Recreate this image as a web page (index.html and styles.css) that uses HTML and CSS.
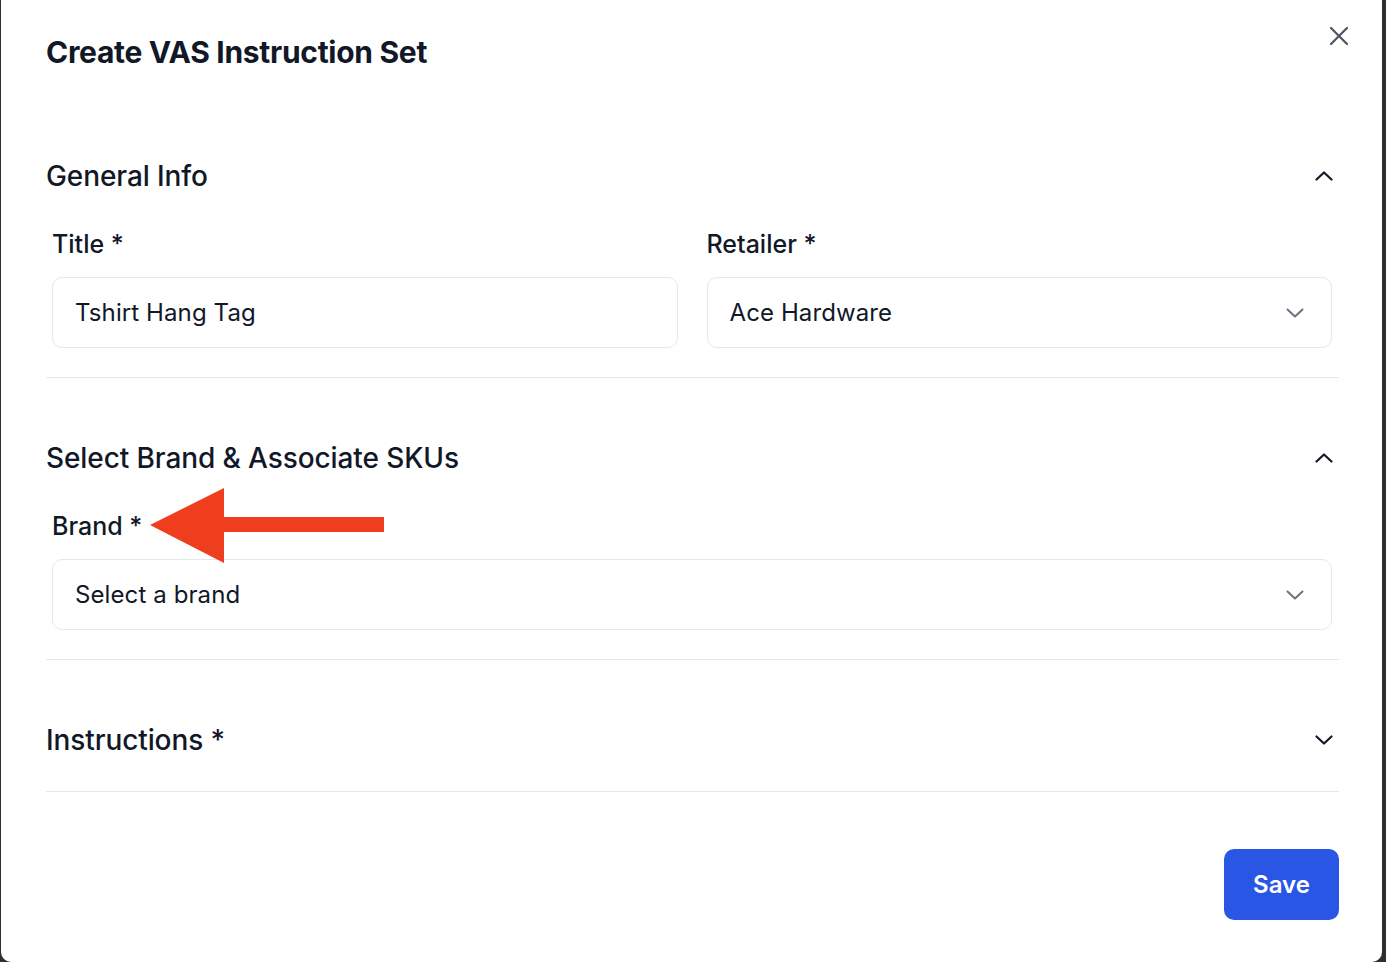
FILE: index.html
```html
<!doctype html>
<html>
<head>
<meta charset="utf-8">
<title>Create VAS Instruction Set</title>
<link rel="stylesheet" href="styles.css">
</head>
<body>
<div class="modal">
	<h1 class="modal-title">Create VAS Instruction Set</h1>
	<button class="close" aria-label="Close">
		<svg width="20" height="20" viewBox="0 0 20 20"><path d="M2 2 L18 18 M18 2 L2 18" stroke="#4b5563" stroke-width="2.2" stroke-linecap="round" fill="none"/></svg>
	</button>

	<div class="section first">
		<div class="section-head">
			<h2>General Info</h2>
			<svg class="chev" width="18" height="10" viewBox="0 0 18 10"><path d="M1.5 8.5 L9 1.5 L16.5 8.5" stroke="#111827" stroke-width="2.2" stroke-linecap="round" stroke-linejoin="round" fill="none"/></svg>
		</div>
		<div class="fields two">
			<div class="field">
				<label>Title *</label>
				<div class="box">Tshirt Hang Tag</div>
			</div>
			<div class="field">
				<label>Retailer *</label>
				<div class="box select">Ace Hardware
					<svg width="18" height="10" viewBox="0 0 18 10"><path d="M1.5 1.5 L9 8.5 L16.5 1.5" stroke="#6b7280" stroke-width="2" stroke-linecap="round" stroke-linejoin="round" fill="none"/></svg>
				</div>
			</div>
		</div>
	</div>

	<div class="section">
		<div class="section-head">
			<h2>Select Brand &amp; Associate SKUs</h2>
			<svg class="chev" width="18" height="10" viewBox="0 0 18 10"><path d="M1.5 8.5 L9 1.5 L16.5 8.5" stroke="#111827" stroke-width="2.2" stroke-linecap="round" stroke-linejoin="round" fill="none"/></svg>
		</div>
		<div class="fields">
			<div class="field">
				<label>Brand *</label>
				<svg class="pointer" width="236" height="76" viewBox="0 0 236 76"><polygon points="0,37 74,0 74,29 234,29 234,44 74,44 74,75" fill="#ef3e1d"/></svg>
				<div class="box select placeholder">Select a brand
					<svg width="18" height="10" viewBox="0 0 18 10"><path d="M1.5 1.5 L9 8.5 L16.5 1.5" stroke="#6b7280" stroke-width="2" stroke-linecap="round" stroke-linejoin="round" fill="none"/></svg>
				</div>
			</div>
		</div>
	</div>

	<div class="section collapsed">
		<div class="section-head">
			<h2>Instructions *</h2>
			<svg class="chev" width="18" height="10" viewBox="0 0 18 10"><path d="M1.5 1.5 L9 8.5 L16.5 1.5" stroke="#111827" stroke-width="2.2" stroke-linecap="round" stroke-linejoin="round" fill="none"/></svg>
		</div>
	</div>

	<div class="footer">
		<button class="save">Save</button>
	</div>
</div>
</body>
</html>
```
FILE: styles.css
```css
* {box-sizing:border-box; }
html, body {margin:0; padding:0; height:962px; overflow:hidden; background:#2e2f31; font-family:Inter,"Noto Sans",sans-serif; color:#111827; }
.modal {position:relative; margin-left:1px; width:1381px; height:962px; background:#fff; border-radius:0 0 10px 10px; padding:32px 43px 0 45px; }
.modal-title {margin:0; font-size:30px; line-height:40px; font-weight:700; letter-spacing:-0.3px; }
.close {position:absolute; top:26px; right:33px; padding:0; border:0; background:none; cursor:pointer; }
.close svg {display:block; }

.section {padding:59px 0 29px; border-bottom:1px solid #e5e7eb; }
.section.first {margin-top:24px; }
.section.collapsed {padding-bottom:30px; }
.section-head {display:flex; align-items:center; justify-content:space-between; height:42px; }
.section-head h2 {margin:0; font-size:28px; font-weight:500; letter-spacing:-0.1px; }
.chev {margin-right:6px; display:block; }

.fields {display:grid; grid-template-columns:1fr; column-gap:29px; padding:0 7px 0 6px; margin-top:31px; }
.fields.two {grid-template-columns:1fr 1fr; }
.field {position:relative; }
.field label {display:block; font-size:25px; line-height:32px; font-weight:500; margin-bottom:17px; }
.box {display:flex; align-items:center; justify-content:space-between; height:71px; border:1px solid #e5e7eb; border-radius:10px; padding:0 27px 0 22px; font-size:24px; letter-spacing:0.1px; color:#111827; }
.box svg {display:block; }
.pointer {position:absolute; left:98px; top:-22px; }

.footer {display:flex; justify-content:flex-end; padding-top:57px; }
.save {width:115px; height:71px; border:0; border-radius:10px; background:#2a56e5; color:#fff; font-family:Inter,sans-serif; font-size:24px; font-weight:600; cursor:pointer; }
```
